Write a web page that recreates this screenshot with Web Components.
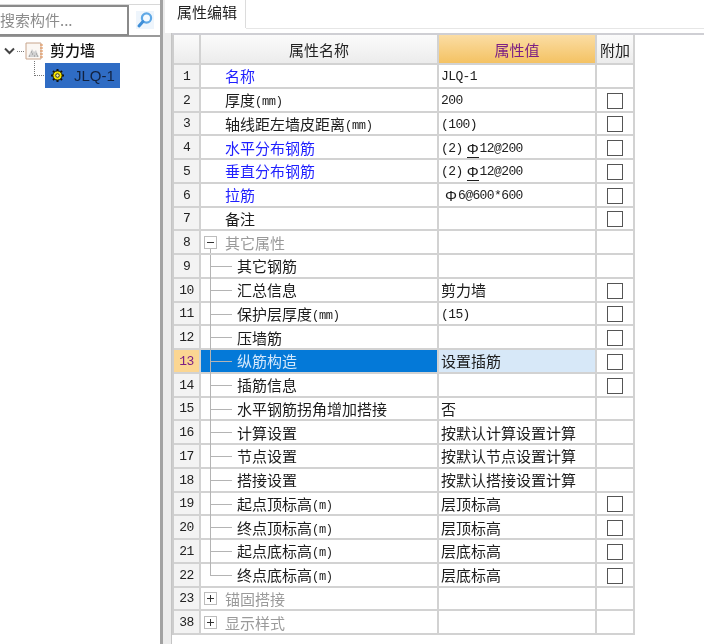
<!DOCTYPE html>
<html lang="zh">
<head>
<meta charset="utf-8">
<title>属性编辑</title>
<style>
  html, body { margin: 0; height: 100%; background: #fff; overflow: hidden; }
  body { font: 15px "Noto Sans CJK SC", "Liberation Sans", sans-serif; color: #1c1c1c; }
</style>
</head>
<body>
<app-shell>
  <tree-panel slot="left"></tree-panel>
  <tab-panel slot="right" label="属性编辑">
    <prop-table>
      <prop-row num="1" kind="link">名称<span slot="value"><mono-text>JLQ-1</mono-text></span></prop-row>
      <prop-row num="2" check>厚度<mono-text unit>(mm)</mono-text><span slot="value"><mono-text>200</mono-text></span></prop-row>
      <prop-row num="3" check>轴线距左墙皮距离<mono-text unit>(mm)</mono-text><span slot="value"><mono-text>(100)</mono-text></span></prop-row>
      <prop-row num="4" kind="link" check>水平分布钢筋<span slot="value"><mono-text>(2)</mono-text><bar-sym grade="c"></bar-sym><mono-text>12@200</mono-text></span></prop-row>
      <prop-row num="5" kind="link" check>垂直分布钢筋<span slot="value"><mono-text>(2)</mono-text><bar-sym grade="c"></bar-sym><mono-text>12@200</mono-text></span></prop-row>
      <prop-row num="6" kind="link" check>拉筋<span slot="value"><bar-sym></bar-sym><mono-text>6@600*600</mono-text></span></prop-row>
      <prop-row num="7" check>备注</prop-row>
      <prop-row num="8" kind="group" open>其它属性</prop-row>
      <prop-row num="9" kind="child">其它钢筋</prop-row>
      <prop-row num="10" kind="child" check>汇总信息<span slot="value">剪力墙</span></prop-row>
      <prop-row num="11" kind="child" check>保护层厚度<mono-text unit>(mm)</mono-text><span slot="value"><mono-text>(15)</mono-text></span></prop-row>
      <prop-row num="12" kind="child" check>压墙筋</prop-row>
      <prop-row num="13" kind="child" check selected>纵筋构造<span slot="value">设置插筋</span></prop-row>
      <prop-row num="14" kind="child" check>插筋信息</prop-row>
      <prop-row num="15" kind="child">水平钢筋拐角增加搭接<span slot="value">否</span></prop-row>
      <prop-row num="16" kind="child">计算设置<span slot="value">按默认计算设置计算</span></prop-row>
      <prop-row num="17" kind="child">节点设置<span slot="value">按默认节点设置计算</span></prop-row>
      <prop-row num="18" kind="child">搭接设置<span slot="value">按默认搭接设置计算</span></prop-row>
      <prop-row num="19" kind="child" check>起点顶标高<mono-text unit>(m)</mono-text><span slot="value">层顶标高</span></prop-row>
      <prop-row num="20" kind="child" check>终点顶标高<mono-text unit>(m)</mono-text><span slot="value">层顶标高</span></prop-row>
      <prop-row num="21" kind="child" check>起点底标高<mono-text unit>(m)</mono-text><span slot="value">层底标高</span></prop-row>
      <prop-row num="22" kind="child" last check>终点底标高<mono-text unit>(m)</mono-text><span slot="value">层底标高</span></prop-row>
      <prop-row num="23" kind="group">锚固搭接</prop-row>
      <prop-row num="38" kind="group">显示样式</prop-row>
    </prop-table>
  </tab-panel>
</app-shell>

<script>
class AppShell extends HTMLElement {
  constructor() {
    super();
    this.attachShadow({ mode: 'open' });
    this.shadowRoot.innerHTML = `
      <style>
        :host { display: flex; height: 644px; width: 704px; overflow: hidden; filter: blur(0.35px); }
        .left { width: 160px; flex: none; }
        .split { width: 3px; flex: none; background: #a2a2a2; }
        .right { flex: 1; min-width: 0; }
      </style>
      <div class="left"><slot name="left"></slot></div>
      <div class="split"></div>
      <div class="right"><slot name="right"></slot></div>
    `;
  }
}

class TreePanel extends HTMLElement {
  constructor() {
    super();
    this.attachShadow({ mode: 'open' });
    this.shadowRoot.innerHTML = `
      <style>
        :host { display: block; height: 100%; }
        .search {
          display: flex;
          height: 30px;
          margin-top: 4px;
          border-top: 1px solid #d8d8d8;
          border-bottom: 2px solid #9a9a9a;
        }
        .input {
          width: 129px;
          box-sizing: border-box;
          margin-bottom: -1px;
          border: 2px solid #8a8a8a;
          border-left: none;
          color: #8c8c8c;
          line-height: 26px;
          white-space: nowrap;
          overflow: hidden;
        }
        .go { flex: 1; display: flex; align-items: center; justify-content: center; }
        .root { display: flex; align-items: center; height: 20px; margin-top: 4px; padding-left: 4px; }
        .dots { width: 7px; margin: 0 1px 0 2px; border-top: 1px dotted #777; }
        .root span { margin: -3px 0 0 7px; color: #111; font-weight: 500; }
        .child { display: flex; align-items: flex-start; margin: 2px 0 0 34px; }
        .elbow { width: 11px; height: 14px; margin-top: -2px; box-sizing: content-box; border-left: 1px dotted #777; border-bottom: 1px dotted #777; }
        .item {
          display: flex; align-items: center; gap: 10px;
          width: 75px; height: 25px; box-sizing: border-box; padding-left: 6px;
          margin-left: -1px;
          background: #2f6cc4;
          color: #12223f;
          font: 15px "Liberation Sans", sans-serif;
        }
      </style>
      <div class="search">
        <div class="input">搜索构件...</div>
        <div class="go">
          <svg width="18" height="18" viewBox="0 0 18 18">
            <rect width="18" height="18" fill="#eef5fc"/>
            <circle cx="10.5" cy="7" r="4.6" fill="#f4faff" stroke="#5fa8e6" stroke-width="2.2"/>
            <path d="M7 10.5 3 15" stroke="#3f8fd8" stroke-width="3" stroke-linecap="round"/>
          </svg>
        </div>
      </div>
      <div class="root">
        <svg width="11" height="8" viewBox="0 0 11 8"><path d="M1 1.5 5.5 6 10 1.5" fill="none" stroke="#444" stroke-width="2"/></svg>
        <div class="dots"></div>
        <svg width="18" height="18" viewBox="0 0 18 18">
          <path d="M1 1h15v16H1z" fill="#fbf7f3" stroke="#c8a58c"/>
          <path d="M15 3h3M15 6h3M15 9h3M15 12h3M15 15h3" stroke="#e08a4a"/>
          <path d="M3 15 7 7l2 3 2-2 3 7z" fill="#d0d0d0"/>
          <path d="M4 14h1M7 12h1M9 14h1M11 12h1M6 10h1M12 14h1" stroke="#8a8a8a"/>
        </svg>
        <span>剪力墙</span>
      </div>
      <div class="child">
        <div class="elbow"></div>
        <div class="item">
          <svg width="13" height="13" viewBox="0 0 13 13">
            <path d="M6.5 0v2.4M6.5 10.6V13M0 6.5h2.4M10.6 6.5H13M2 2l1.6 1.6M9.4 9.4 11 11M11 2 9.4 3.6M3.6 9.4 2 11" stroke="#111" stroke-width="2"/>
            <circle cx="6.5" cy="6.5" r="4.6" fill="#f6e500" stroke="#1d1d00" stroke-width="1"/>
            <circle cx="6.5" cy="6.5" r="1.8" fill="#f6f0a0" stroke="#333" stroke-width="1"/>
          </svg>
          <span>JLQ-1</span>
        </div>
      </div>
    `;
  }
}

class TabPanel extends HTMLElement {
  constructor() {
    super();
    this.attachShadow({ mode: 'open' });
    this.shadowRoot.innerHTML = `
      <style>
        :host { display: flex; flex-direction: column; height: 100%; background: #ececec; }
        .bar { display: flex; height: 33px; flex: none; background: #fff; }
        .gap { width: 2px; background: #ececec; flex: none; }
        .tab {
          width: 81px; height: 28px; flex: none; box-sizing: border-box;
          padding: 0 0 4px 12px; line-height: 24px;
          border-right: 1px solid #dcdcdc;
          color: #222;
        }
        .rest { flex: 1; height: 29px; border-bottom: 1px solid #e6e6e6; box-sizing: border-box; }
        .body { display: flex; flex: 1; min-height: 0; }
        .gutter { width: 8px; flex: none; border-right: 1px solid #c4c4c4; }
        .main { flex: 1; min-width: 0; background: #fff; border-top: 2px solid #cfcfd4; }
      </style>
      <div class="bar">
        <div class="gap"></div>
        <div class="tab">${this.getAttribute('label')}</div>
        <div class="rest"></div>
      </div>
      <div class="body">
        <div class="gutter"></div>
        <div class="main"><slot></slot></div>
      </div>
    `;
  }
}

class PropTable extends HTMLElement {
  constructor() {
    super();
    this.attachShadow({ mode: 'open' });
    this.shadowRoot.innerHTML = `
      <style>
        :host { display: block; width: 463px; border-left: 2px solid #cdcdcd; }
        .head { display: grid; grid-template-columns: 27px 238px 158px 38px; height: 30px; }
        .head div {
          display: flex; align-items: center; justify-content: center;
          border-right: 2px solid #d2d2d2;
          border-bottom: 2px solid #d2d2d2;
          background: linear-gradient(#fbfbfb, #ececec);
          color: #222;
        }
        .head .value { background: linear-gradient(#fbdda4, #f4c263); color: #7c1f84; }
      </style>
      <div class="head">
        <div></div>
        <div>属性名称</div>
        <div class="value">属性值</div>
        <div>附加</div>
      </div>
      <slot></slot>
    `;
  }
}

class PropRow extends HTMLElement {
  constructor() {
    super();
    this.attachShadow({ mode: 'open' });
  }

  connectedCallback() {
    const kind = this.getAttribute('kind') || '';
    let lead = '';
    if (kind === 'child') lead = '<div class="guide"></div>';
    if (kind === 'group') {
      lead = `<div class="box">${this.hasAttribute('open') ? '' : '<i></i>'}</div>`;
    }
    this.shadowRoot.innerHTML = `
      <style>
        :host {
          display: grid;
          grid-template-columns: 27px 238px 158px 38px;
          height: 23.75px;
        }
        .cell {
          display: flex; align-items: center; min-width: 0;
          border-right: 2px solid #d2d2d2;
          border-bottom: 2px solid #d2d2d2;
          white-space: nowrap;
          color: #1c1c1c;
        }
        .num {
          justify-content: center;
          background: #f3f3f3;
          font: 13px "Liberation Mono", monospace;
          letter-spacing: -0.6px;
          color: #222;
          padding-top: 1px;
        }
        .name { padding-left: 24px; }
        .value { padding-left: 2px; }
        .add { justify-content: center; }
        .check { width: 16px; height: 16px; box-sizing: border-box; border: 1.6px solid #555; background: #fff; margin-top: 2px; }

        :host([kind="link"]) .name { color: #1f1fff; }
        :host([kind="group"]) .name { padding-left: 3px; color: #9a9a9a; }
        :host([kind="child"]) .name { padding-left: 0; }
        :host([open]) .name { background: linear-gradient(#b4b4b4, #b4b4b4) 9px 18px / 1px 6px no-repeat; }

        .guide {
          align-self: stretch; flex: none; width: 36px; margin-bottom: -2px;
          background:
            linear-gradient(#b4b4b4, #b4b4b4) 9px 0 / 1px 100% no-repeat,
            linear-gradient(#b4b4b4, #b4b4b4) 10px 11px / 21px 1px no-repeat;
        }
        :host([last]) .guide {
          background:
            linear-gradient(#b4b4b4, #b4b4b4) 9px 0 / 1px 12px no-repeat,
            linear-gradient(#b4b4b4, #b4b4b4) 10px 11px / 21px 1px no-repeat;
        }
        .box {
          flex: none; width: 13px; height: 13px; box-sizing: border-box;
          margin-right: 8px;
          border: 1px solid #bdbdbd;
          display: flex; align-items: center; justify-content: center;
          background: linear-gradient(#333, #333) center / 7px 1px no-repeat;
        }
        .box i { display: block; width: 1px; height: 7px; background: #333; }

        :host([selected]) .num { background: #fbd692; color: #7c1f84; }
        :host([selected]) .name { background: #0479d8; color: #d4e8fb; }
        :host([selected]) .value { background: #d7e8f8; }
      </style>
      <div class="cell num">${this.getAttribute('num')}</div>
      <div class="cell name">${lead}<span><slot></slot></span></div>
      <div class="cell value"><slot name="value"></slot></div>
      <div class="cell add">${this.hasAttribute('check') ? '<div class="check"></div>' : ''}</div>
    `;
  }
}

class MonoText extends HTMLElement {
  constructor() {
    super();
    this.attachShadow({ mode: 'open' });
    // no whitespace around the slot, this element sits inline inside text
    this.shadowRoot.innerHTML = `<style>
        :host { display: inline; font: 13px "Liberation Mono", monospace; letter-spacing: -0.6px; vertical-align: 2px; }
        :host([unit]) { font-size: 12px; letter-spacing: -0.3px; vertical-align: 1px; }
      </style><slot></slot>`;
  }
}

// rebar grade mark: plain circle-bar, grade "c" gets the foot line
class BarSym extends HTMLElement {
  constructor() {
    super();
    this.attachShadow({ mode: 'open' });
    this.shadowRoot.innerHTML = `<style>
        :host { display: inline-block; width: 14px; margin-left: 3px; text-align: center; font: 15px/13px "Liberation Sans", sans-serif; }
        :host([grade="c"]) span { border-bottom: 1px solid currentColor; }
      </style><span>Φ</span>`;
  }
}

customElements.define('app-shell', AppShell);
customElements.define('tree-panel', TreePanel);
customElements.define('tab-panel', TabPanel);
customElements.define('prop-table', PropTable);
customElements.define('prop-row', PropRow);
customElements.define('mono-text', MonoText);
customElements.define('bar-sym', BarSym);
</script>
</body>
</html>
